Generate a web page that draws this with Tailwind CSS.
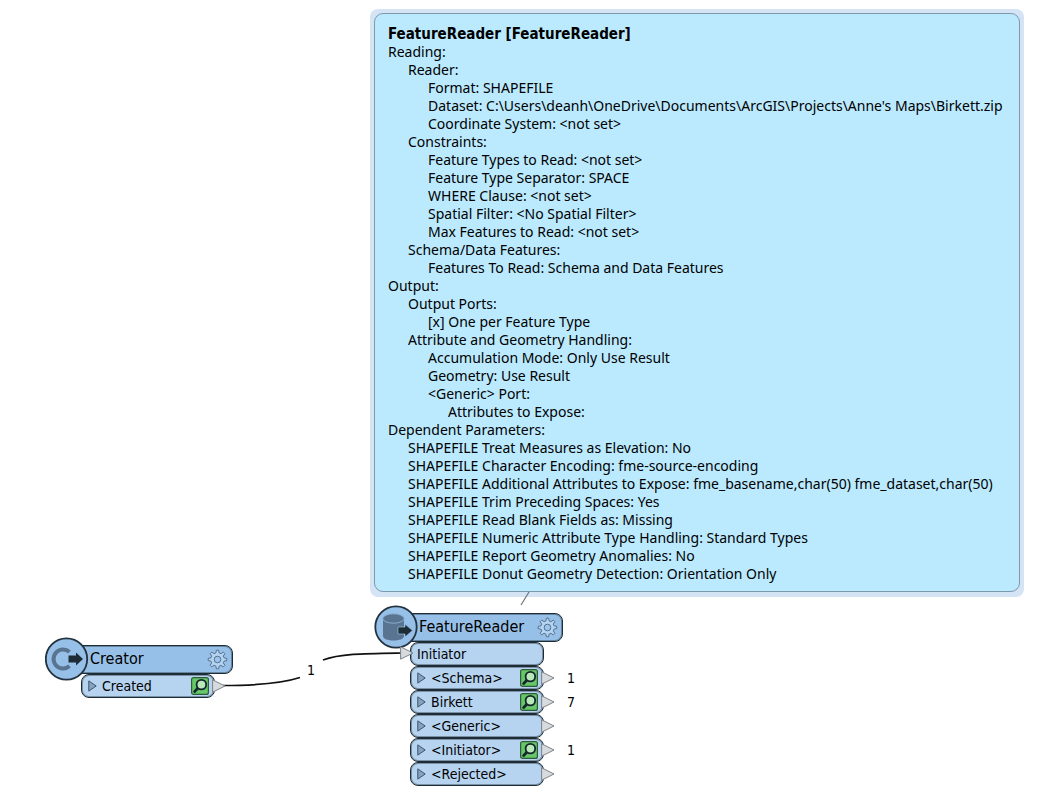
<!DOCTYPE html>
<html lang="en">
<head>
<meta charset="utf-8">
<title>Workspace</title>
<script src="https://cdn.jsdelivr.net/npm/@tailwindcss/browser@4"></script>
</head>
<body class="bg-white text-black">
<svg width="0" height="0" class="absolute">
  <defs>
    <symbol id="gear" viewBox="-10.5 -10.5 21 21">
      <path fill="#b3d3f2" stroke="#56738c" stroke-width="1" stroke-linejoin="round" d="M6.5-1.7 9.3-1.1V1.1L6.5 1.7 5.8 3.4 7.4 5.8 5.8 7.4 3.4 5.8 1.7 6.5 1.1 9.3H-1.1L-1.7 6.5-3.4 5.8-5.8 7.4-7.4 5.8-5.8 3.4-6.5 1.7-9.3 1.1V-1.1L-6.5-1.7-5.8-3.4-7.4-5.8-5.8-7.4-3.4-5.8-1.7-6.5-1.1-9.3H1.1L1.7-6.5 3.4-5.8 5.8-7.4 7.4-5.8 5.8-3.4Z"/>
      <circle r="3.3" fill="#9cc4ec" stroke="#56738c" stroke-width="1"/>
    </symbol>
    <symbol id="inspect" viewBox="0 0 18 18">
      <rect x=".6" y=".6" width="16.8" height="16.8" rx="2" fill="#66c766" stroke="#2f5a3c" stroke-width="1.2"/>
      <path d="M7 11 3.6 14.6" stroke="#15262b" stroke-width="2.8" stroke-linecap="round"/>
      <circle cx="10.4" cy="7.6" r="4.8" fill="#b9e8b9" stroke="#15262b" stroke-width="1.8"/>
    </symbol>
    <symbol id="expand" viewBox="0 0 9 12">
      <path d="M.8.9 8.2 6 .8 11.1Z" fill="#84a3c1" stroke="#3f5569"/>
    </symbol>
    <symbol id="port" viewBox="0 0 14 14">
      <path d="M.6.8 13 7 .6 13.2Z" fill="#d7dbde" stroke="#7b8288"/>
    </symbol>
  </defs>
</svg>

<main class="relative min-h-screen w-full overflow-hidden font-['DejaVu_Sans_Condensed','DejaVu_Sans',sans-serif] text-[14px] leading-[18px]">

  <!-- Annotation -->
  <section class="absolute left-[370px] top-[9px] rounded-lg bg-[#d5e4f5] p-1 pb-[5px]">
    <div class="w-[646px] whitespace-nowrap rounded-[9px] border border-[#7d99ab] bg-[#bbeaff] px-[13px] pb-2 pt-[11px] font-['Noto_Sans',sans-serif]">
      <h1 class="font-['DejaVu_Sans_Condensed','DejaVu_Sans',sans-serif] text-[15px] font-bold leading-[18px]">FeatureReader [FeatureReader]</h1>
      <ul>
        <li>Reading:
          <ul class="pl-5">
            <li>Reader:
              <ul class="pl-5">
                <li>Format: SHAPEFILE</li>
                <li>Dataset: C:\Users\deanh\OneDrive\Documents\ArcGIS\Projects\Anne's Maps\Birkett.zip</li>
                <li>Coordinate System: &lt;not set&gt;</li>
              </ul>
            </li>
            <li>Constraints:
              <ul class="pl-5">
                <li>Feature Types to Read: &lt;not set&gt;</li>
                <li>Feature Type Separator: SPACE</li>
                <li>WHERE Clause: &lt;not set&gt;</li>
                <li>Spatial Filter: &lt;No Spatial Filter&gt;</li>
                <li>Max Features to Read: &lt;not set&gt;</li>
              </ul>
            </li>
            <li>Schema/Data Features:
              <ul class="pl-5">
                <li>Features To Read: Schema and Data Features</li>
              </ul>
            </li>
          </ul>
        </li>
        <li>Output:
          <ul class="pl-5">
            <li>Output Ports:
              <ul class="pl-5">
                <li>[x] One per Feature Type</li>
              </ul>
            </li>
            <li>Attribute and Geometry Handling:
              <ul class="pl-5">
                <li>Accumulation Mode: Only Use Result</li>
                <li>Geometry: Use Result</li>
                <li>&lt;Generic&gt; Port:
                  <ul class="pl-5">
                    <li>Attributes to Expose:</li>
                  </ul>
                </li>
              </ul>
            </li>
          </ul>
        </li>
        <li>Dependent Parameters:
          <ul class="pl-5">
            <li>SHAPEFILE Treat Measures as Elevation: No</li>
            <li>SHAPEFILE Character Encoding: fme-source-encoding</li>
            <li>SHAPEFILE Additional Attributes to Expose: fme_basename,char(50) fme_dataset,char(50)</li>
            <li>SHAPEFILE Trim Preceding Spaces: Yes</li>
            <li>SHAPEFILE Read Blank Fields as: Missing</li>
            <li>SHAPEFILE Numeric Attribute Type Handling: Standard Types</li>
            <li>SHAPEFILE Report Geometry Anomalies: No</li>
            <li>SHAPEFILE Donut Geometry Detection: Orientation Only</li>
          </ul>
        </li>
      </ul>
    </div>
  </section>

  <!-- Connections and the annotation leader -->
  <svg class="absolute left-0 top-0" width="600" height="800" fill="none">
    <path d="M223 685.500C252 685.500 280 684 300 677.500M323 660C340 653.500 365 653.500 402 653" stroke="#111" stroke-width="1.7"/>
    <path d="M529 592 521 605" stroke="#6d7478" stroke-width="1.2"/>
  </svg>
  <span class="absolute left-[307px] top-[661px]">1</span>

  <!-- Creator -->
  <section class="absolute left-[45px] top-[645px] w-[188px]">
    <header class="ml-5 flex h-[29px] items-center justify-between rounded-lg border border-[#1d2c35] bg-[#97c0e8] pb-px pl-6 pr-1 inset-shadow-[0_0_0_1px_#1d2c3566]">
      <h2 class="text-[16px]">Creator</h2>
      <button aria-label="Creator parameters"><svg class="size-[21px]"><use href="#gear"/></svg></button>
    </header>
    <svg class="absolute left-0 top-[-8px]" width="44" height="44">
      <circle cx="21.500" cy="22" r="20.700" fill="#97c0e8" stroke="#22333f" stroke-width="1.8"/>
      <path d="M24.500 15A9.500 9.500 0 1 0 24.500 29" fill="none" stroke="#587490" stroke-width="4"/>
      <path d="M23.500 18.500H31V15.500L38 22 31 28.500V25.500H23.500Z" fill="#1d2c35"/>
    </svg>
    <ul class="ml-9 w-[134px]">
      <li class="relative flex h-6 items-center gap-[5px] rounded-lg border border-[#1d2c35] bg-[#b6d3f0] px-1.5 inset-shadow-[0_0_0_1px_#1d2c3566]">
        <button aria-label="Expand Created"><svg class="h-3 w-[9px]"><use href="#expand"/></svg></button>
        <span>Created</span>
        <button class="absolute right-[5px] top-0.5" aria-label="Inspect Created"><svg class="size-[18px]"><use href="#inspect"/></svg></button>
        <svg class="absolute -right-3 top-1 size-[14px]"><use href="#port"/></svg>
      </li>
    </ul>
  </section>

  <!-- FeatureReader -->
  <section class="absolute left-[374px] top-[613px] w-[189px]">
    <header class="ml-5 flex h-[29px] items-center justify-between rounded-lg border border-[#1d2c35] bg-[#97c0e8] pb-px pl-6 pr-1 inset-shadow-[0_0_0_1px_#1d2c3566]">
      <h2 class="text-[16px]">FeatureReader</h2>
      <button aria-label="FeatureReader parameters"><svg class="size-[21px]"><use href="#gear"/></svg></button>
    </header>
    <svg class="absolute left-0 top-[-8px]" width="44" height="44">
      <circle cx="22" cy="22" r="20.700" fill="#97c0e8" stroke="#22333f" stroke-width="1.8"/>
      <path d="M9 13V31C9 34 14 35.500 19.500 35.500S30 34 30 31V13Z" fill="#587490"/>
      <ellipse cx="19.500" cy="13.500" rx="10.700" ry="4.700" fill="#587490" stroke="#8db3d8" stroke-width=".9"/>
      <path d="M24 22H31V19L38.500 25.500 31 32V29H24Z" fill="#1d2c35" stroke="#97c0e8" stroke-width=".7"/>
    </svg>
    <ul class="ml-9 w-[134px]">
      <li class="relative flex h-6 items-center rounded-lg border border-[#1d2c35] bg-[#b6d3f0] px-1.5 inset-shadow-[0_0_0_1px_#1d2c3566]">
        <svg class="absolute -left-[11px] top-[3px] size-[14px]"><use href="#port"/></svg>
        <span>Initiator</span>
      </li>
      <li class="relative flex h-6 items-center gap-[5px] rounded-lg border border-[#1d2c35] bg-[#b6d3f0] px-1.5 inset-shadow-[0_0_0_1px_#1d2c3566]">
        <button aria-label="Expand Schema"><svg class="h-3 w-[9px]"><use href="#expand"/></svg></button>
        <span>&lt;Schema&gt;</span>
        <button class="absolute right-[5px] top-0.5" aria-label="Inspect Schema"><svg class="size-[18px]"><use href="#inspect"/></svg></button>
        <svg class="absolute -right-3 top-1 size-[14px]"><use href="#port"/></svg>
        <span class="absolute -right-8">1</span>
      </li>
      <li class="relative flex h-6 items-center gap-[5px] rounded-lg border border-[#1d2c35] bg-[#b6d3f0] px-1.5 inset-shadow-[0_0_0_1px_#1d2c3566]">
        <button aria-label="Expand Birkett"><svg class="h-3 w-[9px]"><use href="#expand"/></svg></button>
        <span>Birkett</span>
        <button class="absolute right-[5px] top-0.5" aria-label="Inspect Birkett"><svg class="size-[18px]"><use href="#inspect"/></svg></button>
        <svg class="absolute -right-3 top-1 size-[14px]"><use href="#port"/></svg>
        <span class="absolute -right-8">7</span>
      </li>
      <li class="relative flex h-6 items-center gap-[5px] rounded-lg border border-[#1d2c35] bg-[#b6d3f0] px-1.5 inset-shadow-[0_0_0_1px_#1d2c3566]">
        <button aria-label="Expand Generic"><svg class="h-3 w-[9px]"><use href="#expand"/></svg></button>
        <span>&lt;Generic&gt;</span>
        <svg class="absolute -right-3 top-1 size-[14px]"><use href="#port"/></svg>
      </li>
      <li class="relative flex h-6 items-center gap-[5px] rounded-lg border border-[#1d2c35] bg-[#b6d3f0] px-1.5 inset-shadow-[0_0_0_1px_#1d2c3566]">
        <button aria-label="Expand Initiator"><svg class="h-3 w-[9px]"><use href="#expand"/></svg></button>
        <span>&lt;Initiator&gt;</span>
        <button class="absolute right-[5px] top-0.5" aria-label="Inspect Initiator"><svg class="size-[18px]"><use href="#inspect"/></svg></button>
        <svg class="absolute -right-3 top-1 size-[14px]"><use href="#port"/></svg>
        <span class="absolute -right-8">1</span>
      </li>
      <li class="relative flex h-6 items-center gap-[5px] rounded-lg border border-[#1d2c35] bg-[#b6d3f0] px-1.5 inset-shadow-[0_0_0_1px_#1d2c3566]">
        <button aria-label="Expand Rejected"><svg class="h-3 w-[9px]"><use href="#expand"/></svg></button>
        <span>&lt;Rejected&gt;</span>
        <svg class="absolute -right-3 top-1 size-[14px]"><use href="#port"/></svg>
      </li>
    </ul>
  </section>
</main>
</body>
</html>
